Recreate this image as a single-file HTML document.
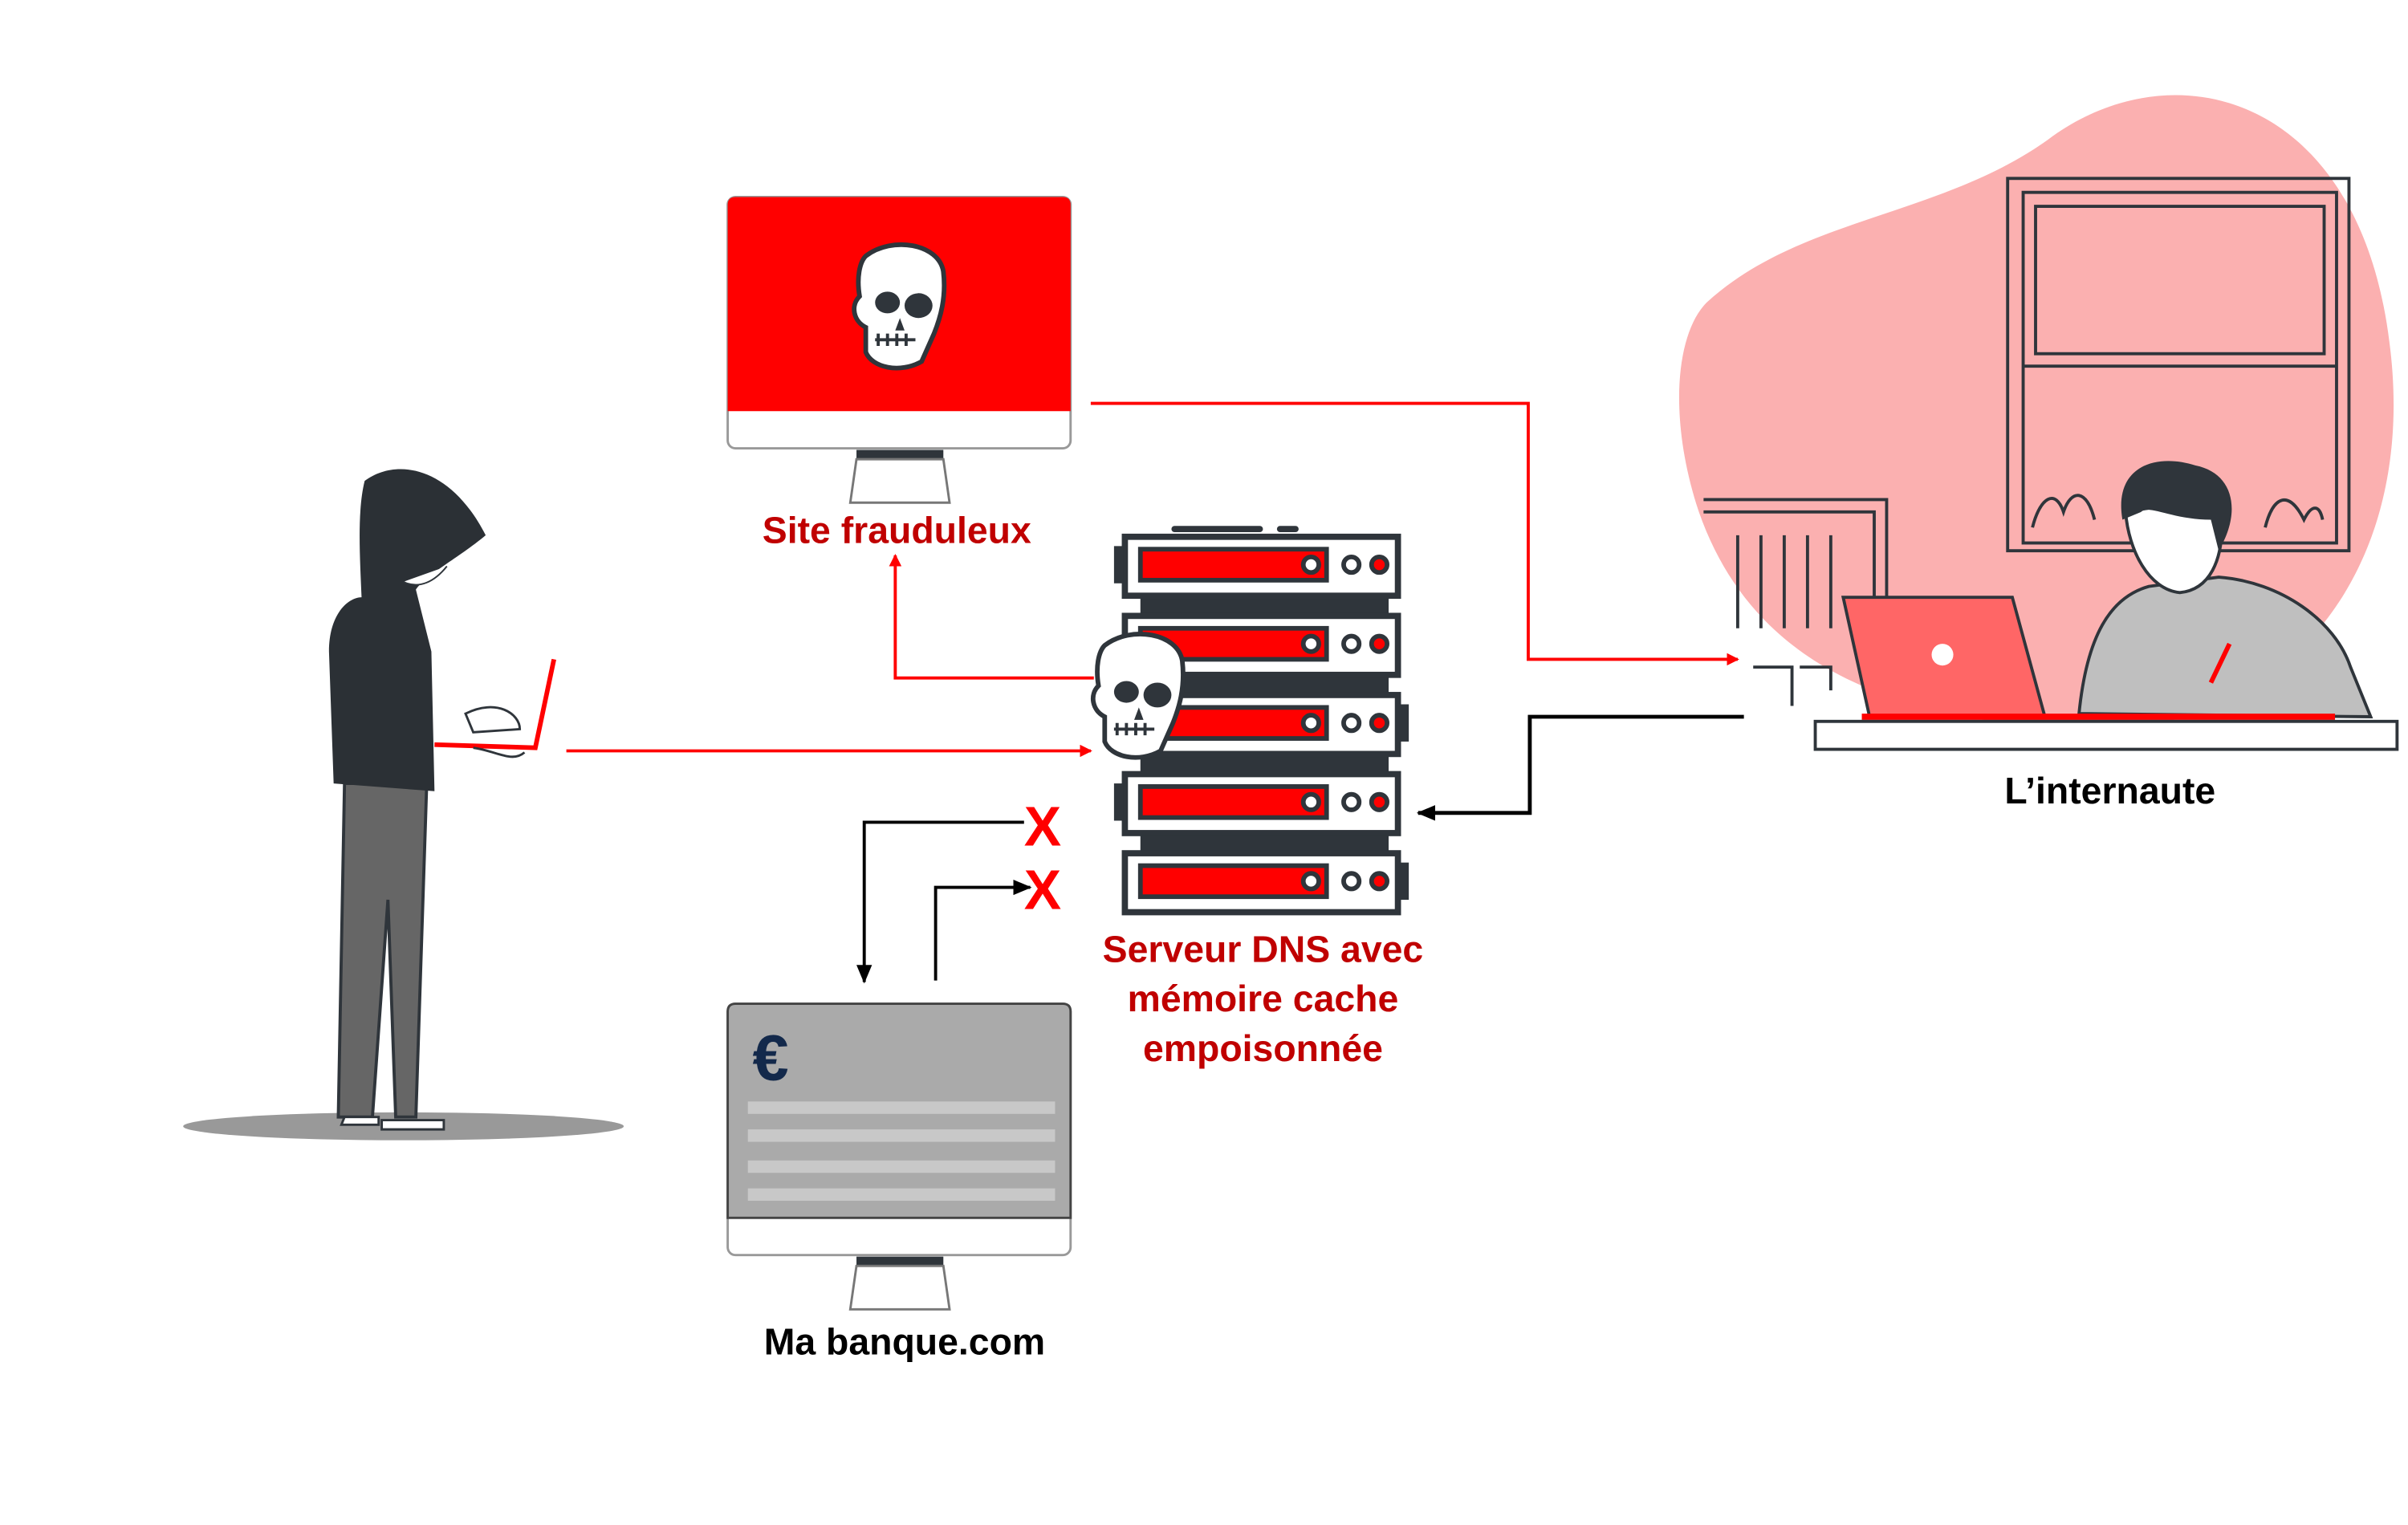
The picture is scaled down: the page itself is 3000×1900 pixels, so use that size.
<!DOCTYPE html>
<html><head><meta charset="utf-8"><style>
html,body{margin:0;padding:0;background:#fff;}
svg{display:block;}
text{font-family:"Liberation Sans",sans-serif;font-weight:bold;}
</style></head><body>
<svg width="3000" height="1900" viewBox="0 0 1552 983" xmlns="http://www.w3.org/2000/svg">
<defs>
<marker id="ar" markerWidth="8" markerHeight="8" refX="7" refY="4" orient="auto" markerUnits="userSpaceOnUse"><path d="M0,0 L8,4 L0,8 z" fill="#f00"/></marker>
<marker id="ab" markerWidth="12" markerHeight="10" refX="11" refY="5" orient="auto" markerUnits="userSpaceOnUse"><path d="M0,0 L12,5 L0,10 z" fill="#000"/></marker>
<g id="skull">
<path d="M-22,-32 C-5,-45 25,-40 28,-22 C30,-5 26,8 22,18 L14,36 C0,44 -18,40 -22,30 L-22,14 C-30,10 -32,0 -26,-6 C-28,-18 -26,-28 -22,-32 z" fill="#fff" stroke="#2f353b" stroke-width="3"/>
<ellipse cx="-8" cy="-2" rx="8" ry="7" fill="#2f353b"/><ellipse cx="12" cy="0" rx="9" ry="8" fill="#2f353b"/>
<path d="M0,8 l-3,8 h6 z" fill="#2f353b"/>
<path d="M-16,22 h26 M-14,18 v8 M-8,18 v8 M-2,18 v8 M4,18 v8" stroke="#2f353b" stroke-width="2" fill="none"/>
</g>
<g id="unit">
<rect x="0" y="0" width="176" height="38" fill="#fff" stroke="#2f353b" stroke-width="4"/>
<rect x="10" y="8" width="120" height="20" fill="#f00" stroke="#2f353b" stroke-width="3"/>
<circle cx="120" cy="18" r="5" fill="#fff" stroke="#2f353b" stroke-width="3"/>
<circle cx="146" cy="18" r="5" fill="#fff" stroke="#2f353b" stroke-width="3"/>
<circle cx="164" cy="18" r="5" fill="#f00" stroke="#2f353b" stroke-width="3"/>
</g>
</defs>

<!-- pink blob -->
<path d="M1100,195 C1160,140 1250,140 1320,90 C1400,30 1520,60 1540,220 C1560,370 1470,480 1330,470 C1220,462 1130,430 1095,330 C1075,270 1080,215 1100,195 z" fill="#fbb0b0"/>
<!-- window -->
<g fill="none" stroke="#2f353b" stroke-width="2">
<rect x="1294" y="115" width="220" height="240"/><rect x="1304" y="124" width="202" height="226"/>
<rect x="1312" y="133" width="186" height="95"/><line x1="1304" y1="236" x2="1506" y2="236"/>
<path d="M1310,340 c5,-20 15,-25 20,-10 c5,-15 15,-15 20,5 M1460,340 c5,-20 15,-25 25,-5 c5,-10 10,-10 12,0"/>
<path d="M1098,322 h118 v80 M1098,330 h110 v70 M1120,345 v60 M1135,345 v60 M1150,345 v60 M1165,345 v60 M1180,345 v60 M1130,430 h25 v25 M1160,430 h20 v15"/>
</g>
<!-- person -->
<path d="M1340,460 C1345,410 1360,385 1385,378 L1430,372 C1470,375 1505,400 1515,430 L1528,462 z" fill="#bfbfbf" stroke="#2f353b" stroke-width="2"/>
<path d="M1370,330 C1372,355 1385,380 1405,382 C1425,380 1432,360 1432,340 L1430,320 z" fill="#fff" stroke="#2f353b" stroke-width="2"/>
<path d="M1368,335 C1362,300 1390,292 1415,300 C1440,305 1445,330 1430,355 L1425,335 C1400,335 1385,325 1380,330 z" fill="#2f353b"/>
<path d="M1188,385 L1297,385 L1318,462 L1205,462 z" fill="#f66" stroke="#2f353b" stroke-width="2"/>
<circle cx="1252" cy="422" r="7" fill="#fff"/>
<path d="M1200,462 h305" stroke="#f00" stroke-width="4"/>
<path d="M1425,440 l12,-25" stroke="#f00" stroke-width="3"/>
<rect x="1170" y="465" width="375" height="18" fill="#fff" stroke="#2f353b" stroke-width="2"/>
<text x="1360" y="518" font-size="24" text-anchor="middle" fill="#000">L’internaute</text>

<!-- red monitor -->
<rect x="469" y="127" width="221" height="162" rx="5" fill="#fff" stroke="#999" stroke-width="1.5"/>
<path d="M474,127 h211 q5,0 5,5 v133 h-221 v-133 q0,-5 5,-5z" fill="#f00"/>
<rect x="552" y="290" width="56" height="6" fill="#2f353b"/>
<path d="M552,296 h56 l4,28 h-64 z" fill="#fff" stroke="#777" stroke-width="1.5"/>
<use href="#skull" x="580" y="197"/>
<text x="578" y="350" font-size="24" text-anchor="middle" fill="#c00000">Site frauduleux</text>

<!-- bank monitor -->
<rect x="469" y="647" width="221" height="162" rx="5" fill="#fff" stroke="#999" stroke-width="1.5"/>
<path d="M474,647 h211 q5,0 5,5 v133 h-221 v-133 q0,-5 5,-5z" fill="#aaa" stroke="#444" stroke-width="1.5"/>
<g fill="#c8c8c8"><rect x="482" y="710" width="198" height="8"/><rect x="482" y="728" width="198" height="8"/><rect x="482" y="748" width="198" height="8"/><rect x="482" y="766" width="198" height="8"/></g>
<text x="485" y="696" font-size="42" fill="#13294b">€</text>
<rect x="552" y="810" width="56" height="6" fill="#2f353b"/>
<path d="M552,816 h56 l4,28 h-64 z" fill="#fff" stroke="#777" stroke-width="1.5"/>
<text x="583" y="873" font-size="24" text-anchor="middle" fill="#000">Ma banque.com</text>

<!-- server -->
<rect x="735" y="380" width="160" height="170" fill="#2f353b"/>
<path d="M757,341 h55 M825,341 h10" stroke="#2f353b" stroke-width="4" stroke-linecap="round"/>
<use href="#unit" x="725" y="346"/><use href="#unit" x="725" y="397"/><use href="#unit" x="725" y="448"/><use href="#unit" x="725" y="499"/><use href="#unit" x="725" y="550"/>
<rect x="718" y="352" width="6" height="24" fill="#2f353b"/><rect x="718" y="505" width="6" height="24" fill="#2f353b"/>
<rect x="902" y="454" width="6" height="24" fill="#2f353b"/><rect x="902" y="556" width="6" height="24" fill="#2f353b"/>
<use href="#skull" x="734" y="448"/>
<text x="814" y="620" font-size="24" text-anchor="middle" fill="#c00000">Serveur DNS avec</text>
<text x="814" y="652" font-size="24" text-anchor="middle" fill="#c00000">mémoire cache</text>
<text x="814" y="684" font-size="24" text-anchor="middle" fill="#c00000">empoisonnée</text>

<!-- arrows -->
<g fill="none" stroke-width="2">
<path d="M703,260 H985 V425 H1120" stroke="#f00" marker-end="url(#ar)"/>
<path d="M705,437 H577 V358" stroke="#f00" marker-end="url(#ar)"/>
<path d="M365,484 H703" stroke="#f00" marker-end="url(#ar)"/>
<path d="M1124,462 H986 V524 H914" stroke="#000" stroke-width="2.5" marker-end="url(#ab)"/>
<path d="M660,530 H557 V633" stroke="#000" marker-end="url(#ab)"/>
<path d="M603,632 V572 H664" stroke="#000" marker-end="url(#ab)"/>
</g>
<text x="672" y="545" font-size="36" text-anchor="middle" fill="#f00">X</text>
<text x="672" y="586" font-size="36" text-anchor="middle" fill="#f00">X</text>

<!-- hacker -->
<ellipse cx="260" cy="726" rx="142" ry="9" fill="#999"/>
<path d="M222,505 L218,720 L240,720 L250,580 L255,720 L268,720 L275,505 z" fill="#666" stroke="#2f353b" stroke-width="2"/>
<path d="M235,310 C255,295 290,300 313,345 C295,360 275,370 268,380 L278,420 L280,510 L215,505 L212,420 C212,395 225,385 233,385 C232,360 230,330 235,310 z" fill="#2b3035"/>
<path d="M260,375 C270,380 280,375 288,365" fill="#fff" stroke="#2f353b"/>
<path d="M280,480 L345,482 L357,425" fill="none" stroke="#f00" stroke-width="3"/>
<path d="M300,460 C320,450 335,460 335,470 L305,472 z M305,482 C320,484 330,492 338,485" fill="#fff" stroke="#2f353b" stroke-width="1.5"/>
<path d="M222,720 h22 v5 h-24 z M246,722 h40 v6 h-40 z" fill="#fff" stroke="#2f353b" stroke-width="1.5"/>
</svg>
</body></html>
